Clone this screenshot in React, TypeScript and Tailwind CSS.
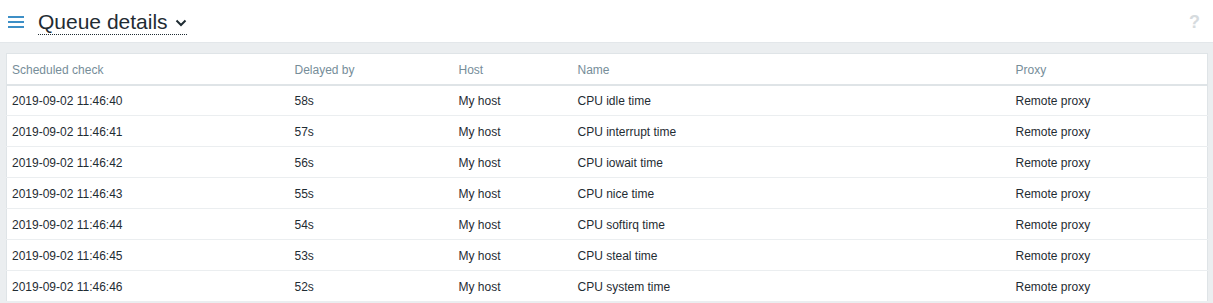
const ROWS = [
  ["2019-09-02 11:46:40", "58s", "My host", "CPU idle time", "Remote proxy"],
  ["2019-09-02 11:46:41", "57s", "My host", "CPU interrupt time", "Remote proxy"],
  ["2019-09-02 11:46:42", "56s", "My host", "CPU iowait time", "Remote proxy"],
  ["2019-09-02 11:46:43", "55s", "My host", "CPU nice time", "Remote proxy"],
  ["2019-09-02 11:46:44", "54s", "My host", "CPU softirq time", "Remote proxy"],
  ["2019-09-02 11:46:45", "53s", "My host", "CPU steal time", "Remote proxy"],
  ["2019-09-02 11:46:46", "52s", "My host", "CPU system time", "Remote proxy"],
]

const COLS = ["w-[283px]", "w-[164px]", "w-[119px]", "w-[438px]", ""]

export default function App() {
  return (
    <div className="min-h-[303px] bg-[#ebeef0] font-['Liberation_Sans',Arial,sans-serif] text-[12px] text-[#1f2c33]">
      {/* Page header */}
      <header className="flex h-[43px] items-center border-b border-[#e3e7ea] bg-white pl-[8px] pr-[13px]">
        <svg width="16" height="12" viewBox="0 0 16 12" className="mt-[2px]" aria-hidden>
          <rect x="0" y="0" width="16" height="2" fill="#3d8fc6" />
          <rect x="0" y="5" width="16" height="2" fill="#3d8fc6" />
          <rect x="0" y="10" width="16" height="2" fill="#3d8fc6" />
        </svg>
        <h1 className="ml-[14px] mt-[2px] flex items-center border-b border-dotted border-[#1f2c33] text-[21px] leading-[25px] text-[#1f2c33]">
          Queue details
          <svg width="12" height="8" viewBox="0 0 12 8" className="ml-[7px] mt-[3px]" aria-hidden>
            <path d="M1.5 1.5 L6 6 L10.5 1.5" fill="none" stroke="#1f2c33" strokeWidth="2" />
          </svg>
        </h1>
        <span className="ml-auto mt-[2px] text-[18px] font-bold text-[#d6dbde]">?</span>
      </header>

      {/* Content */}
      <main className="pl-[6px] pr-[5px] pt-[10px]">
        <table className="w-[1202px] table-fixed border-collapse border border-[#dfe4e7] bg-white">
          <thead>
            <tr className="h-[31px] border-b-2 border-[#dfe4e7] text-left text-[#768d99]">
              {["Scheduled check", "Delayed by", "Host", "Name", "Proxy"].map((h, i) => (
                <th key={h} className={`${COLS[i]} px-[5px] pt-[2px] font-normal`}>
                  {h}
                </th>
              ))}
            </tr>
          </thead>
          <tbody>
            {ROWS.map((r) => (
              <tr key={r[0]} className="h-[31px] border-b border-[#ebeef0]">
                {r.map((c, i) => (
                  <td key={i} className="px-[5px] pt-[1px]">
                    {c}
                  </td>
                ))}
              </tr>
            ))}
          </tbody>
        </table>
      </main>
    </div>
  )
}
